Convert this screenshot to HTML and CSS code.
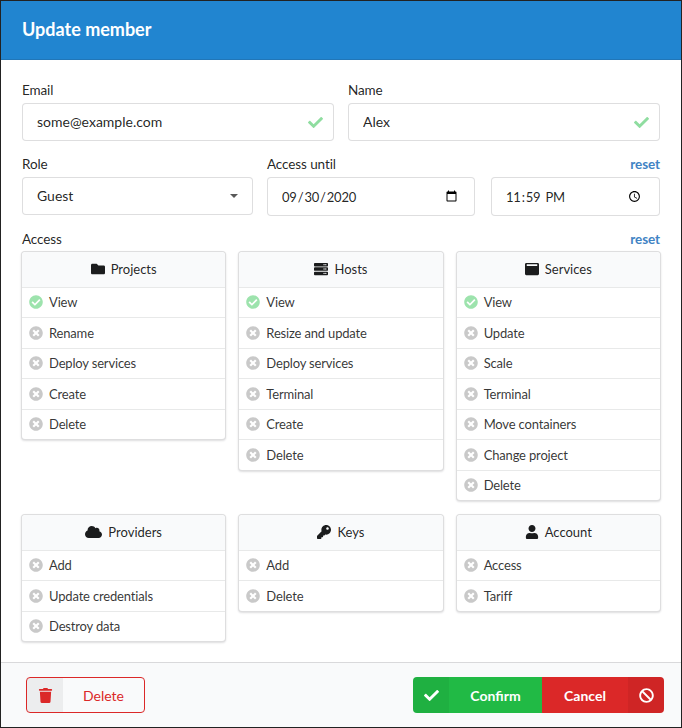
FILE: index.html
```html
<!DOCTYPE html>
<html lang="en">
<head>
    <meta charset="UTF-8">
    <title>Update member</title>
    <link rel="stylesheet" href="styles.css">
</head>
<body>
    <svg class="sprites" width="0" height="0">
        <symbol id="i-check" viewBox="0 0 512 512"><path d="M173.898 439.404l-166.4-166.4c-9.997-9.997-9.997-26.206 0-36.204l36.203-36.204c9.997-9.998 26.207-9.998 36.204 0L192 312.69 432.095 72.596c9.997-9.997 26.207-9.997 36.204 0l36.203 36.204c9.997 9.997 9.997 26.206 0 36.204l-294.4 294.401c-9.998 9.997-26.207 9.997-36.204-.001z"/></symbol>
        <symbol id="i-yes" viewBox="0 0 512 512"><path d="M504 256c0 136.967-111.033 248-248 248S8 392.967 8 256 119.033 8 256 8s248 111.033 248 248zM227.314 387.314l184-184c6.248-6.248 6.248-16.379 0-22.627l-22.627-22.627c-6.248-6.249-16.379-6.249-22.628 0L216 308.118l-70.059-70.059c-6.248-6.248-16.379-6.248-22.628 0l-22.627 22.627c-6.248 6.248-6.248 16.379 0 22.627l104 104c6.249 6.249 16.379 6.249 22.628.001z"/></symbol>
        <symbol id="i-no" viewBox="0 0 512 512"><path d="M256 8C119 8 8 119 8 256s111 248 248 248 248-111 248-248S393 8 256 8zm121.6 313.1c4.7 4.7 4.7 12.3 0 17L338 377.6c-4.7 4.7-12.3 4.7-17 0L256 312l-65.1 65.6c-4.7 4.7-12.3 4.7-17 0L134.4 338c-4.7-4.7-4.7-12.3 0-17l65.6-65-65.6-65.1c-4.7-4.7-4.7-12.3 0-17l39.6-39.6c4.7-4.7 12.3-4.7 17 0l65 65.7 65.1-65.6c4.7-4.7 12.3-4.7 17 0l39.6 39.6c4.7 4.7 4.7 12.3 0 17L312 256l65.6 65.1z"/></symbol>
        <symbol id="i-folder" viewBox="0 0 512 512"><path d="M464 128H272l-64-64H48C21.49 64 0 85.49 0 112v288c0 26.51 21.49 48 48 48h416c26.51 0 48-21.49 48-48V176c0-26.51-21.49-48-48-48z"/></symbol>
        <symbol id="i-server" viewBox="0 0 512 512"><path fill-rule="evenodd" d="M32 32h448a32 32 0 0 1 32 32v64a32 32 0 0 1-32 32H32a32 32 0 0 1-32-32V64a32 32 0 0 1 32-32zm400 40a24 24 0 1 0 0 48 24 24 0 0 0 0-48zm-64 0a24 24 0 1 0 0 48 24 24 0 0 0 0-48zM32 192h448a32 32 0 0 1 32 32v64a32 32 0 0 1-32 32H32a32 32 0 0 1-32-32v-64a32 32 0 0 1 32-32zm400 40a24 24 0 1 0 0 48 24 24 0 0 0 0-48zm-64 0a24 24 0 1 0 0 48 24 24 0 0 0 0-48zM32 352h448a32 32 0 0 1 32 32v64a32 32 0 0 1-32 32H32a32 32 0 0 1-32-32v-64a32 32 0 0 1 32-32zm400 40a24 24 0 1 0 0 48 24 24 0 0 0 0-48zm-64 0a24 24 0 1 0 0 48 24 24 0 0 0 0-48z"/></symbol>
        <symbol id="i-window" viewBox="0 0 512 512"><path fill-rule="evenodd" d="M464 32H48C21.5 32 0 53.5 0 80v352c0 26.5 21.5 48 48 48h416c26.5 0 48-21.5 48-48V80c0-26.5-21.5-48-48-48zm-16 112H64V84h384v60z"/></symbol>
        <symbol id="i-cloud" viewBox="0 0 640 512"><path d="M537.6 226.6c4.1-10.7 6.4-22.4 6.4-34.6 0-53-43-96-96-96-19.7 0-38.1 6-53.3 16.2C367 64.2 315.3 32 256 32c-88.4 0-160 71.6-160 160 0 2.7.1 5.4.2 8.1C40.2 219.8 0 273.2 0 336c0 79.5 64.5 144 144 144h368c70.7 0 128-57.3 128-128 0-61.9-44-113.6-102.4-125.4z"/></symbol>
        <symbol id="i-key" viewBox="0 0 512 512"><path d="M512 176.001C512 273.203 433.202 352 336 352c-11.22 0-22.19-1.062-32.827-3.069l-24.012 27.014A23.999 23.999 0 0 1 261.223 384H224v40c0 13.255-10.745 24-24 24h-40v40c0 13.255-10.745 24-24 24H24c-13.255 0-24-10.745-24-24v-78.059c0-6.365 2.529-12.47 7.029-16.971l161.802-161.802C163.108 213.814 160 195.271 160 176 160 78.798 238.797.001 335.999 0 433.488-.001 512 78.511 512 176.001zM336 128c0 26.51 21.49 48 48 48s48-21.49 48-48-21.49-48-48-48-48 21.49-48 48z"/></symbol>
        <symbol id="i-user" viewBox="0 0 448 512"><path d="M224 256c70.7 0 128-57.3 128-128S294.7 0 224 0 96 57.3 96 128s57.3 128 128 128zm89.6 32h-16.7c-22.2 10.2-46.9 16-72.9 16s-50.6-5.8-72.9-16h-16.7C60.2 288 0 348.2 0 422.4V464c0 26.5 21.5 48 48 48h352c26.5 0 48-21.5 48-48v-41.6c0-74.2-60.2-134.4-134.4-134.4z"/></symbol>
        <symbol id="i-trash" viewBox="0 0 448 512"><path d="M432 32H312l-9.4-18.7A24 24 0 0 0 281.1 0H166.8a23.72 23.72 0 0 0-21.4 13.3L136 32H16A16 16 0 0 0 0 48v32a16 16 0 0 0 16 16h416a16 16 0 0 0 16-16V48a16 16 0 0 0-16-16zM53.2 467a48 48 0 0 0 47.9 45h245.8a48 48 0 0 0 47.9-45L416 128H32z"/></symbol>
        <symbol id="i-ban" viewBox="0 0 512 512"><path d="M256 8C119.034 8 8 119.033 8 256s111.034 248 248 248 248-111.034 248-248S392.967 8 256 8zm130.108 117.892c65.448 65.448 70 165.481 20.677 235.637L150.47 105.216c70.204-49.356 170.226-44.735 235.638 20.676zM125.892 386.108c-65.448-65.448-70-165.481-20.677-235.637L361.53 406.784c-70.203 49.356-170.226 44.736-235.638-20.676z"/></symbol>
    </svg>

    <div class="modal">
        <h1 class="modal-title">Update member</h1>

        <form class="modal-body">
            <div class="fields two">
                <div class="field">
                    <div class="label-row"><label>Email</label></div>
                    <div class="input-wrap">
                        <input class="input" type="text" value="some@example.com">
                        <svg class="valid-mark"><use href="#i-check"/></svg>
                    </div>
                </div>
                <div class="field">
                    <div class="label-row"><label>Name</label></div>
                    <div class="input-wrap">
                        <input class="input" type="text" value="Alex">
                        <svg class="valid-mark"><use href="#i-check"/></svg>
                    </div>
                </div>
            </div>

            <div class="fields three">
                <div class="field">
                    <div class="label-row"><label>Role</label></div>
                    <div class="input select">Guest<span class="caret"></span></div>
                </div>
                <div class="field">
                    <div class="label-row"><label>Access until</label></div>
                    <input class="input date" type="date" value="2020-09-30">
                </div>
                <div class="field">
                    <div class="label-row end"><a class="reset">reset</a></div>
                    <input class="input date" type="time" value="23:59">
                </div>
            </div>

            <div class="label-row access-label"><label>Access</label><a class="reset">reset</a></div>

            <div class="cards">
                <div class="card">
                    <div class="card-head"><svg class="head-icon"><use href="#i-folder"/></svg>Projects</div>
                    <div class="row"><svg class="yes"><use href="#i-yes"/></svg>View</div>
                    <div class="row"><svg class="no"><use href="#i-no"/></svg>Rename</div>
                    <div class="row"><svg class="no"><use href="#i-no"/></svg>Deploy services</div>
                    <div class="row"><svg class="no"><use href="#i-no"/></svg>Create</div>
                    <div class="row"><svg class="no"><use href="#i-no"/></svg>Delete</div>
                </div>
                <div class="card">
                    <div class="card-head"><svg class="head-icon"><use href="#i-server"/></svg>Hosts</div>
                    <div class="row"><svg class="yes"><use href="#i-yes"/></svg>View</div>
                    <div class="row"><svg class="no"><use href="#i-no"/></svg>Resize and update</div>
                    <div class="row"><svg class="no"><use href="#i-no"/></svg>Deploy services</div>
                    <div class="row"><svg class="no"><use href="#i-no"/></svg>Terminal</div>
                    <div class="row"><svg class="no"><use href="#i-no"/></svg>Create</div>
                    <div class="row"><svg class="no"><use href="#i-no"/></svg>Delete</div>
                </div>
                <div class="card">
                    <div class="card-head"><svg class="head-icon"><use href="#i-window"/></svg>Services</div>
                    <div class="row"><svg class="yes"><use href="#i-yes"/></svg>View</div>
                    <div class="row"><svg class="no"><use href="#i-no"/></svg>Update</div>
                    <div class="row"><svg class="no"><use href="#i-no"/></svg>Scale</div>
                    <div class="row"><svg class="no"><use href="#i-no"/></svg>Terminal</div>
                    <div class="row"><svg class="no"><use href="#i-no"/></svg>Move containers</div>
                    <div class="row"><svg class="no"><use href="#i-no"/></svg>Change project</div>
                    <div class="row"><svg class="no"><use href="#i-no"/></svg>Delete</div>
                </div>
                <div class="card">
                    <div class="card-head"><svg class="head-icon wide"><use href="#i-cloud"/></svg>Providers</div>
                    <div class="row"><svg class="no"><use href="#i-no"/></svg>Add</div>
                    <div class="row"><svg class="no"><use href="#i-no"/></svg>Update credentials</div>
                    <div class="row"><svg class="no"><use href="#i-no"/></svg>Destroy data</div>
                </div>
                <div class="card">
                    <div class="card-head"><svg class="head-icon"><use href="#i-key"/></svg>Keys</div>
                    <div class="row"><svg class="no"><use href="#i-no"/></svg>Add</div>
                    <div class="row"><svg class="no"><use href="#i-no"/></svg>Delete</div>
                </div>
                <div class="card">
                    <div class="card-head"><svg class="head-icon"><use href="#i-user"/></svg>Account</div>
                    <div class="row"><svg class="no"><use href="#i-no"/></svg>Access</div>
                    <div class="row"><svg class="no"><use href="#i-no"/></svg>Tariff</div>
                </div>
            </div>
        </form>

        <div class="modal-actions">
            <button class="btn btn-delete" type="button">
                <span class="btn-icon"><svg><use href="#i-trash"/></svg></span>
                <span class="btn-text">Delete</span>
            </button>
            <div class="btn-group">
                <button class="btn btn-confirm" type="button">
                    <span class="btn-icon"><svg><use href="#i-check"/></svg></span>
                    <span class="btn-text">Confirm</span>
                </button>
                <button class="btn btn-cancel" type="button">
                    <span class="btn-text">Cancel</span>
                    <span class="btn-icon"><svg><use href="#i-ban"/></svg></span>
                </button>
            </div>
        </div>
    </div>
</body>
</html>
```

FILE: styles.css
```css
* {
    box-sizing: border-box;
}
body {
    margin: 0;
    background: #fff;
    font-family: Lato, "Liberation Sans", sans-serif;
    font-size: 14px;
    color: rgba(0, 0, 0, 0.87);
}
.sprites {
    position: absolute;
}
.modal {
    width: 682px;
    height: 728px;
    border: 1px solid #222;
    display: flex;
    flex-direction: column;
}
.modal-title {
    margin: 0;
    height: 59px;
    padding-left: 21px;
    padding-bottom: 2px;
    display: flex;
    align-items: center;
    background: #2185d0;
    color: #fff;
    font-size: 18px;
    font-weight: 700;
    border-bottom: 1px solid rgba(34, 36, 38, 0.15);
}
.modal-body {
    flex: 1;
    padding: 20px 21px 0;
}

/* form rows */
.fields {
    display: grid;
    column-gap: 14px;
    margin-bottom: 13px;
}
.fields.two {
    grid-template-columns: 312px 312px;
}
.fields.three {
    grid-template-columns: 231px 208px 169px;
    column-gap: 14px;
}
.fields.three .field:last-child {
    margin-left: 2px;
    width: 169px;
}
.label-row {
    height: 20px;
    margin-bottom: 3px;
    display: flex;
    justify-content: space-between;
    align-items: center;
    line-height: 20px;
    font-size: 13.5px;
    letter-spacing: -0.1px;
}
.label-row.end {
    justify-content: flex-end;
}
.reset {
    color: #4183c4;
    font-weight: 700;
    font-size: 13.5px;
}
.input-wrap {
    position: relative;
}
.input {
    display: block;
    width: 100%;
    height: 38px;
    padding: 0 14px;
    border: 1px solid rgba(34, 36, 38, 0.15);
    border-radius: 4px;
    background: #fff;
    font-family: inherit;
    font-size: 14px;
    color: rgba(0, 0, 0, 0.87);
    line-height: 36px;
    outline: none;
}
.input-wrap .input {
    padding-bottom: 2px;
}
.date {
    height: 39px;
    padding-left: 13px;
    font-size: 13px;
    letter-spacing: -0.2px;
}
.valid-mark {
    position: absolute;
    right: 11px;
    top: 12px;
    width: 15px;
    height: 15px;
    fill: #8fdda0;
}
.select {
    display: flex;
    justify-content: space-between;
    align-items: center;
}
.caret {
    border-left: 4px solid transparent;
    border-right: 4px solid transparent;
    border-top: 4px solid rgba(0, 0, 0, 0.65);
}
.access-label {
    margin-bottom: 2px;
}

/* permission cards */
.cards {
    display: grid;
    grid-template-columns: repeat(3, 1fr);
    column-gap: 12px;
    row-gap: 13px;
    align-items: start;
    margin: 0 -1px;
}
.card {
    border: 1px solid rgba(34, 36, 38, 0.15);
    border-radius: 4px;
    box-shadow: 0 1px 2px rgba(34, 36, 38, 0.15);
    background: #fff;
    font-size: 13px;
}
.card-head {
    height: 34.5px;
    display: flex;
    align-items: center;
    justify-content: center;
    background: #f9fafb;
    border-radius: 4px 4px 0 0;
}
.head-icon {
    width: 14px;
    height: 14px;
    margin-right: 6px;
    fill: #1b1c1d;
}
.head-icon.wide {
    width: 17px;
}
.row {
    height: 30.5px;
    padding-left: 7px;
    display: flex;
    align-items: center;
    gap: 6px;
    border-top: 1px solid rgba(34, 36, 38, 0.1);
    color: rgba(0, 0, 0, 0.8);
    letter-spacing: -0.17px;
}
.row svg {
    width: 14px;
    height: 14px;
    flex: none;
}
.yes {
    fill: #9de3ad;
}
.no {
    fill: #c9c9c9;
}

/* footer */
.modal-actions {
    height: 65px;
    padding: 14px 17px 0 25px;
    display: flex;
    justify-content: space-between;
    background: #f9fafb;
    border-top: 1px solid rgba(34, 36, 38, 0.15);
}
.btn-group {
    display: flex;
}
.btn {
    height: 36px;
    padding: 0;
    border: 0;
    display: flex;
    align-items: center;
    font-family: inherit;
    font-size: 14px;
    font-weight: 700;
    color: #fff;
}
.btn-icon {
    width: 36px;
    height: 100%;
    display: flex;
    align-items: center;
    justify-content: center;
    background: rgba(0, 0, 0, 0.05);
}
.btn-icon svg {
    width: 15px;
    height: 15px;
    fill: currentColor;
}
.btn-text {
    flex: 1;
    text-align: center;
}
.btn-delete {
    width: 119px;
    border: 1px solid #db2828;
    border-radius: 4px;
    background: transparent;
    color: #db2828;
    font-weight: 400;
}
.btn-delete .btn-icon {
    border-radius: 3px 0 0 3px;
}
.btn-confirm {
    width: 129px;
    background: #21ba45;
    border-radius: 4px 0 0 4px;
}
.btn-confirm .btn-icon {
    border-radius: 4px 0 0 4px;
}
.btn-cancel {
    width: 122px;
    background: #db2828;
    border-radius: 0 4px 4px 0;
}
.btn-cancel .btn-icon {
    border-radius: 0 4px 4px 0;
}
```
